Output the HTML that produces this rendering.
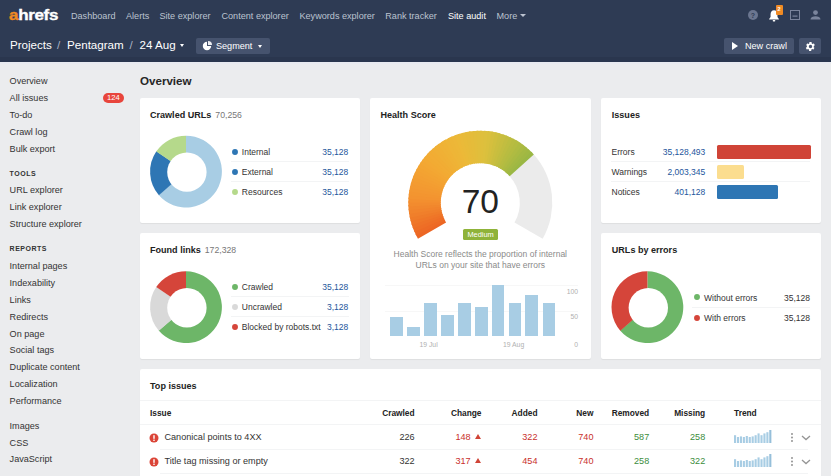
<!DOCTYPE html>
<html>
<head>
<meta charset="utf-8">
<title>Site audit</title>
<style>
*{box-sizing:border-box;margin:0;padding:0}
html,body{width:831px;height:476px;overflow:hidden}
body{font-family:"Liberation Sans",sans-serif;background:#ebecee;color:#333;position:relative;font-size:9.1px}
.abs{position:absolute;white-space:nowrap}
#hdr{position:absolute;left:0;top:0;width:831px;height:62px;background:#2e3b54;border-bottom:5px solid #2a364e;box-shadow:0 2px 0 #e8eaf0}
.nav{position:absolute;top:10.8px;font-size:9.1px;line-height:11px;color:#bcc3d0;white-space:nowrap}
.nav.on{color:#fff}
.crumb{position:absolute;top:38px;font-size:11.6px;line-height:14px;color:#fff;white-space:nowrap}
.crumb.sep{color:#aab2c2}
.btn{position:absolute;top:37.6px;height:16.8px;background:#46536e;border-radius:2px;color:#fff;font-size:9.1px;line-height:16.8px;white-space:nowrap}
.sb{position:absolute;left:9.6px;font-size:9.1px;line-height:12px;color:#333;white-space:nowrap}
.sbh{position:absolute;left:9.6px;font-size:7px;line-height:10px;font-weight:bold;letter-spacing:.5px;color:#333;white-space:nowrap}
.card{position:absolute;background:#fff;border-radius:2px;box-shadow:0 1px 1px rgba(0,0,0,.06)}
.ct{position:absolute;left:10px;top:11px;font-size:9.05px;line-height:12px;font-weight:bold;color:#222;white-space:nowrap}
.ct span{font-weight:normal;color:#777;margin-left:1.5px;font-size:8.7px}
.lg{position:absolute;font-size:8.5px;line-height:12px;color:#333;white-space:nowrap}
.lv{position:absolute;font-size:8.5px;line-height:12px;color:#24569c;white-space:nowrap;text-align:right}
.dot{position:absolute;width:6.2px;height:6.2px;border-radius:50%;margin:.15px 0 0 .3px}
.hr{position:absolute;height:1px;background:#f3f4f5}
.th{position:absolute;font-size:8.35px;line-height:12px;font-weight:bold;color:#222;white-space:nowrap}
.td{position:absolute;font-size:9.1px;line-height:12px;white-space:nowrap}
.r{text-align:right}
.ax{position:absolute;font-size:6.8px;line-height:8px;color:#b0b0b0;white-space:nowrap}
</style>
</head>
<body>
<div id="hdr">
  <div class="abs" id="logo" style="left:9px;top:6.25px;font-size:15px;line-height:18px;font-weight:bold;color:#fff;transform-origin:0 0;transform:scaleX(1.135);letter-spacing:-.3px;-webkit-text-stroke:.35px #fff"><span style="color:#f08a24;-webkit-text-stroke:.35px #f08a24">a</span>hrefs</div>
  <div class="nav" style="left:71px">Dashboard</div>
  <div class="nav" style="left:126px">Alerts</div>
  <div class="nav" style="left:159.5px">Site explorer</div>
  <div class="nav" style="left:221.5px">Content explorer</div>
  <div class="nav" style="left:299.5px">Keywords explorer</div>
  <div class="nav" style="left:385.3px">Rank tracker</div>
  <div class="nav on" style="left:448px">Site audit</div>
  <div class="nav" style="left:496.5px">More</div>
  <div class="abs" style="left:520.1px;top:14px;width:0;height:0;border-left:3px solid transparent;border-right:3px solid transparent;border-top:3.5px solid #bcc3d0"></div>

  <!-- header icons -->
  <svg class="abs" style="left:747px;top:9px" width="12" height="12" viewBox="0 0 12 12"><circle cx="6" cy="6" r="5" fill="#6b7690"/><text x="6" y="8.6" font-size="7" font-weight="bold" text-anchor="middle" fill="#2e3c56" font-family="Liberation Sans">?</text></svg>
  <svg class="abs" style="left:767.3px;top:8.8px" width="15.1" height="14" viewBox="0 0 14 13"><path d="M6.5 1.2C4.4 1.2 3.3 2.8 3.3 5v2.4L2 9.2v.6h9v-.6L9.700 7.400V5C9.700 2.800 8.600 1.200 6.500 1.200Z" fill="#fff"/><rect x="5.300" y="10.300" width="2.400" height="1.200" rx=".6" fill="#fff"/></svg>
  <div class="abs" style="left:775.5px;top:5px;width:7px;height:9.5px;background:#f08a24;border-radius:1px;color:#fff;font-size:5.5px;line-height:9.5px;text-align:center;font-weight:bold">2</div>
  <svg class="abs" style="left:789px;top:9px" width="12" height="12" viewBox="0 0 12 12"><rect x="1.500" y="1.500" width="9" height="9" fill="none" stroke="#7a849c" stroke-width="1"/><rect x="3.500" y="6.500" width="5" height="1.200" fill="#7a849c"/></svg>
  <svg class="abs" style="left:809px;top:9px" width="13" height="12" viewBox="0 0 13 12"><circle cx="6.500" cy="3.600" r="2.400" fill="#7a849c"/><path d="M1.500 10.500C1.500 8.500 4 7.300 6.500 7.300S11.500 8.500 11.500 10.500Z" fill="#7a849c"/></svg>

  <div class="crumb" style="left:10px">Projects</div>
  <div class="crumb sep" style="left:57px">/</div>
  <div class="crumb" style="left:67px">Pentagram</div>
  <div class="crumb sep" style="left:129.5px">/</div>
  <div class="crumb" style="left:139.5px">24 Aug</div>
  <div class="abs" style="left:180px;top:44px;width:0;height:0;border-left:2.5px solid transparent;border-right:2.5px solid transparent;border-top:3px solid #fff"></div>
  <div class="btn" style="left:196px;width:74px;padding-left:20px">Segment</div>
  <svg class="abs" style="left:202px;top:41px" width="10" height="10" viewBox="0 0 10 10"><path d="M5 .8A4.200 4.200 0 1 0 9.200 5H5Z" fill="#fff"/><path d="M6 0A4 4 0 0 1 10 4H6Z" fill="#fff" opacity=".9"/></svg>
  <div class="abs" style="left:257.5px;top:44.500px;width:0;height:0;border-left:2.5px solid transparent;border-right:2.5px solid transparent;border-top:3px solid #fff"></div>
  <div class="btn" style="left:724px;width:70px;padding-left:21px">New crawl</div>
  <div class="abs" style="left:732px;top:42px;width:0;height:0;border-top:4px solid transparent;border-bottom:4px solid transparent;border-left:6.5px solid #fff"></div>
  <div class="btn" style="left:799px;width:22px"></div>
  <svg class="abs" style="left:804.500px;top:40.500px" width="11" height="11" viewBox="0 0 24 24"><path fill="#fff" d="M19.140 12.940c.04-.3.060-.610.060-.940 0-.320-.020-.640-.070-.940l2.030-1.580a.490.490 0 0 0 .120-.610l-1.920-3.320a.488.488 0 0 0-.590-.220l-2.390.960c-.5-.380-1.030-.7-1.620-.940l-.360-2.540a.484.484 0 0 0-.480-.410h-3.840c-.240 0-.430.170-.470.410l-.360 2.540c-.590.240-1.130.570-1.620.940l-2.390-.960c-.220-.080-.470 0-.590.220L2.740 8.870c-.120.210-.080.470.120.610l2.030 1.580c-.5.300-.9.630-.9.940s.2.640.07.940l-2.030 1.580a.490.490 0 0 0-.120.610l1.920 3.320c.120.220.370.290.590.220l2.390-.960c.5.380 1.030.7 1.620.940l.360 2.540c.5.240.240.410.480.410h3.840c.240 0 .440-.170.470-.410l.360-2.540c.590-.240 1.130-.560 1.620-.940l2.390.960c.220.080.470 0 .590-.220l1.920-3.320c.120-.220.070-.470-.120-.610l-2.010-1.580zM12 15.600c-1.980 0-3.600-1.620-3.600-3.600s1.620-3.600 3.600-3.600 3.600 1.620 3.600 3.600-1.620 3.600-3.600 3.600z"/></svg>
</div>

<div class="sb" style="top:75px">Overview</div>
<div class="sb" style="top:92px">All issues</div>
<div class="abs" style="left:103px;top:92.5px;width:20.8px;height:10.4px;border-radius:6px;background:#e8453c;color:#fff;font-size:7.6px;line-height:10.4px;text-align:center">124</div>
<div class="sb" style="top:109px">To-do</div>
<div class="sb" style="top:126px">Crawl log</div>
<div class="sb" style="top:143px">Bulk export</div>
<div class="sbh" style="top:168.7px">TOOLS</div>
<div class="sb" style="top:184.3px">URL explorer</div>
<div class="sb" style="top:201.3px">Link explorer</div>
<div class="sb" style="top:218.3px">Structure explorer</div>
<div class="sbh" style="top:243.5px">REPORTS</div>
<div class="sb" style="top:260px">Internal pages</div>
<div class="sb" style="top:277px">Indexability</div>
<div class="sb" style="top:293.5px">Links</div>
<div class="sb" style="top:310.5px">Redirects</div>
<div class="sb" style="top:327.5px">On page</div>
<div class="sb" style="top:344px">Social tags</div>
<div class="sb" style="top:361px">Duplicate content</div>
<div class="sb" style="top:378px">Localization</div>
<div class="sb" style="top:395px">Performance</div>
<div class="sb" style="top:420px">Images</div>
<div class="sb" style="top:436.5px">CSS</div>
<div class="sb" style="top:453px">JavaScript</div>

<div class="abs" id="h1" style="left:140px;top:72.8px;font-size:11.6px;line-height:16px;font-weight:bold;color:#262626">Overview</div>

<div class="card" id="c1" style="left:140px;top:98px;width:220px;height:125px">
  <div class="ct">Crawled URLs <span>70,256</span></div>
  <svg class="abs" style="left:0;top:0" width="100" height="123" viewBox="0 0 100 123"><path d="M46 73.6L46.00 37.70A35.9 35.9 0 1 1 18.70 96.92Z" fill="#a8cde4"/><path d="M46 73.6L18.91 97.15A35.9 35.9 0 0 1 16.41 53.27Z" fill="#2e76b4"/><path d="M46 73.6L16.24 53.52A35.9 35.9 0 0 1 46.00 37.70Z" fill="#b5d98b"/><circle cx="46.90" cy="74.10" r="19.7" fill="#fff"/></svg>
  <svg class="abs" style="left:90.75px;top:49.9px" width="8" height="8" viewBox="0 0 8 8"><circle cx="4" cy="4" r="2.95" fill="#2e76b4"/></svg><div class="lg" style="left:101.8px;top:48px">Internal</div><div class="lv" style="right:11.8px;top:48px">35,128</div>
  <div class="hr" style="left:91px;top:62.8px;width:118px"></div>
  <svg class="abs" style="left:90.75px;top:69.9px" width="8" height="8" viewBox="0 0 8 8"><circle cx="4" cy="4" r="2.95" fill="#2e76b4"/></svg><div class="lg" style="left:101.8px;top:68px">External</div><div class="lv" style="right:11.8px;top:68px">35,128</div>
  <div class="hr" style="left:91px;top:82.8px;width:118px"></div>
  <svg class="abs" style="left:90.75px;top:90.2px" width="8" height="8" viewBox="0 0 8 8"><circle cx="4" cy="4" r="2.95" fill="#b5d98b"/></svg><div class="lg" style="left:101.8px;top:88px">Resources</div><div class="lv" style="right:11.8px;top:88px">35,128</div>
</div>

<div class="card" id="c2" style="left:370px;top:98px;width:221px;height:260.5px">
  <div class="ct" style="left:10.5px">Health Score</div>
  <svg class="abs" style="left:0;top:0" width="219" height="160" viewBox="0 0 219 160"><path d="M163.38 56.06A72 72 0 0 1 172.65 140.70L144.51 124.45A39.5 39.5 0 0 0 139.42 78.01Z" fill="#ebebeb"/><path d="M47.95 140.70A72 72 0 0 1 45.48 136.04L74.74 121.89A39.5 39.5 0 0 0 76.09 124.45Z" fill="#ec6624"/><path d="M46.15 137.39A72 72 0 0 1 43.93 132.60L73.89 120.01A39.5 39.5 0 0 0 75.11 122.63Z" fill="#ed6a25"/><path d="M44.52 133.99A72 72 0 0 1 42.56 129.09L73.14 118.08A39.5 39.5 0 0 0 74.21 120.77Z" fill="#ee6e26"/><path d="M43.08 130.50A72 72 0 0 1 41.37 125.51L72.49 116.12A39.5 39.5 0 0 0 73.42 118.86Z" fill="#ee7227"/><path d="M41.82 126.95A72 72 0 0 1 40.38 121.87L71.94 114.12A39.5 39.5 0 0 0 72.73 116.91Z" fill="#ef7628"/><path d="M40.75 123.33A72 72 0 0 1 39.58 118.19L71.50 112.10A39.5 39.5 0 0 0 72.15 114.92Z" fill="#ef7b29"/><path d="M39.87 119.67A72 72 0 0 1 38.97 114.47L71.17 110.06A39.5 39.5 0 0 0 71.66 112.91Z" fill="#f07f2b"/><path d="M39.19 115.96A72 72 0 0 1 38.55 110.72L70.94 108.01A39.5 39.5 0 0 0 71.29 110.88Z" fill="#f1832c"/><path d="M38.69 112.23A72 72 0 0 1 38.34 106.96L70.82 105.94A39.5 39.5 0 0 0 71.02 108.83Z" fill="#f1872d"/><path d="M38.40 108.47A72 72 0 0 1 38.32 103.19L70.81 103.87A39.5 39.5 0 0 0 70.85 106.77Z" fill="#f28b2e"/><path d="M38.30 104.70A72 72 0 0 1 38.49 99.43L70.91 101.81A39.5 39.5 0 0 0 70.80 104.70Z" fill="#f38f2f"/><path d="M38.40 100.93A72 72 0 0 1 38.87 95.68L71.11 99.75A39.5 39.5 0 0 0 70.85 102.63Z" fill="#f39330"/><path d="M38.69 97.17A72 72 0 0 1 39.44 91.95L71.42 97.71A39.5 39.5 0 0 0 71.02 100.57Z" fill="#f39530"/><path d="M39.19 93.44A72 72 0 0 1 40.20 88.26L71.84 95.68A39.5 39.5 0 0 0 71.29 98.52Z" fill="#f39731"/><path d="M39.87 89.73A72 72 0 0 1 41.16 84.61L72.37 93.68A39.5 39.5 0 0 0 71.66 96.49Z" fill="#f39931"/><path d="M40.75 86.07A72 72 0 0 1 42.30 81.02L73.00 91.71A39.5 39.5 0 0 0 72.15 94.48Z" fill="#f39b31"/><path d="M41.82 82.45A72 72 0 0 1 43.64 77.50L73.73 89.78A39.5 39.5 0 0 0 72.73 92.49Z" fill="#f39d31"/><path d="M43.08 78.90A72 72 0 0 1 45.15 74.04L74.56 87.88A39.5 39.5 0 0 0 73.42 90.54Z" fill="#f39f32"/><path d="M44.52 75.41A72 72 0 0 1 46.85 70.68L75.49 86.03A39.5 39.5 0 0 0 74.21 88.63Z" fill="#f3a132"/><path d="M46.15 72.01A72 72 0 0 1 48.71 67.40L76.51 84.24A39.5 39.5 0 0 0 75.11 86.77Z" fill="#f3a332"/><path d="M47.95 68.70A72 72 0 0 1 50.75 64.23L77.63 82.50A39.5 39.5 0 0 0 76.09 84.95Z" fill="#f3a532"/><path d="M49.92 65.49A72 72 0 0 1 52.95 61.17L78.84 80.82A39.5 39.5 0 0 0 77.17 83.19Z" fill="#f3a733"/><path d="M52.05 62.38A72 72 0 0 1 55.31 58.23L80.13 79.20A39.5 39.5 0 0 0 78.34 81.48Z" fill="#f3a933"/><path d="M54.35 59.39A72 72 0 0 1 57.81 55.41L81.51 77.66A39.5 39.5 0 0 0 79.60 79.84Z" fill="#f2ab33"/><path d="M56.79 56.52A72 72 0 0 1 60.47 52.73L82.96 76.19A39.5 39.5 0 0 0 80.95 78.27Z" fill="#f2ac34"/><path d="M59.39 53.79A72 72 0 0 1 63.25 50.20L84.49 74.80A39.5 39.5 0 0 0 82.37 76.77Z" fill="#f1ad34"/><path d="M62.12 51.19A72 72 0 0 1 66.17 47.81L86.09 73.49A39.5 39.5 0 0 0 83.87 75.35Z" fill="#f0af35"/><path d="M64.99 48.75A72 72 0 0 1 69.21 45.58L87.76 72.26A39.5 39.5 0 0 0 85.44 74.00Z" fill="#f0b035"/><path d="M67.98 46.45A72 72 0 0 1 72.36 43.51L89.49 71.13A39.5 39.5 0 0 0 87.08 72.74Z" fill="#efb236"/><path d="M71.09 44.32A72 72 0 0 1 75.61 41.61L91.27 70.09A39.5 39.5 0 0 0 88.79 71.57Z" fill="#efb336"/><path d="M74.30 42.35A72 72 0 0 1 78.96 39.88L93.11 69.14A39.5 39.5 0 0 0 90.55 70.49Z" fill="#eeb537"/><path d="M77.61 40.55A72 72 0 0 1 82.40 38.33L94.99 68.29A39.5 39.5 0 0 0 92.37 69.51Z" fill="#edb637"/><path d="M81.01 38.92A72 72 0 0 1 85.91 36.96L96.92 67.54A39.5 39.5 0 0 0 94.23 68.61Z" fill="#edb738"/><path d="M84.50 37.48A72 72 0 0 1 89.49 35.77L98.88 66.89A39.5 39.5 0 0 0 96.14 67.82Z" fill="#ecb938"/><path d="M88.05 36.22A72 72 0 0 1 93.13 34.78L100.88 66.34A39.5 39.5 0 0 0 98.09 67.13Z" fill="#eaba39"/><path d="M91.67 35.15A72 72 0 0 1 96.81 33.98L102.90 65.90A39.5 39.5 0 0 0 100.08 66.55Z" fill="#e8bb39"/><path d="M95.33 34.27A72 72 0 0 1 100.53 33.37L104.94 65.57A39.5 39.5 0 0 0 102.09 66.06Z" fill="#e6bb3a"/><path d="M99.04 33.59A72 72 0 0 1 104.28 32.95L106.99 65.34A39.5 39.5 0 0 0 104.12 65.69Z" fill="#e5bc3a"/><path d="M102.77 33.09A72 72 0 0 1 108.04 32.74L109.06 65.22A39.5 39.5 0 0 0 106.17 65.42Z" fill="#e3bd3b"/><path d="M106.53 32.80A72 72 0 0 1 111.81 32.72L111.13 65.21A39.5 39.5 0 0 0 108.23 65.25Z" fill="#e1be3c"/><path d="M110.30 32.70A72 72 0 0 1 115.57 32.89L113.19 65.31A39.5 39.5 0 0 0 110.30 65.20Z" fill="#dfbf3c"/><path d="M114.07 32.80A72 72 0 0 1 119.32 33.27L115.25 65.51A39.5 39.5 0 0 0 112.37 65.25Z" fill="#ddc03d"/><path d="M117.83 33.09A72 72 0 0 1 123.05 33.84L117.29 65.82A39.5 39.5 0 0 0 114.43 65.42Z" fill="#dac03d"/><path d="M121.56 33.59A72 72 0 0 1 126.74 34.60L119.32 66.24A39.5 39.5 0 0 0 116.48 65.69Z" fill="#d5bf3e"/><path d="M125.27 34.27A72 72 0 0 1 130.39 35.56L121.32 66.77A39.5 39.5 0 0 0 118.51 66.06Z" fill="#d0bf3e"/><path d="M128.93 35.15A72 72 0 0 1 133.98 36.70L123.29 67.40A39.5 39.5 0 0 0 120.52 66.55Z" fill="#cbbe3f"/><path d="M132.55 36.22A72 72 0 0 1 137.50 38.04L125.22 68.13A39.5 39.5 0 0 0 122.51 67.13Z" fill="#c7be3f"/><path d="M136.10 37.48A72 72 0 0 1 140.96 39.55L127.12 68.96A39.5 39.5 0 0 0 124.46 67.82Z" fill="#c2bd40"/><path d="M139.59 38.92A72 72 0 0 1 144.32 41.25L128.97 69.89A39.5 39.5 0 0 0 126.37 68.61Z" fill="#bdbd40"/><path d="M142.99 40.55A72 72 0 0 1 147.60 43.11L130.76 70.91A39.5 39.5 0 0 0 128.23 69.51Z" fill="#b8bc41"/><path d="M146.30 42.35A72 72 0 0 1 150.77 45.15L132.50 72.03A39.5 39.5 0 0 0 130.05 70.49Z" fill="#b4bc41"/><path d="M149.51 44.32A72 72 0 0 1 153.83 47.35L134.18 73.24A39.5 39.5 0 0 0 131.81 71.57Z" fill="#afbb42"/><path d="M152.62 46.45A72 72 0 0 1 156.77 49.71L135.80 74.53A39.5 39.5 0 0 0 133.52 72.74Z" fill="#aaba42"/><path d="M155.61 48.75A72 72 0 0 1 159.59 52.21L137.34 75.91A39.5 39.5 0 0 0 135.16 74.00Z" fill="#a4b943"/><path d="M158.48 51.19A72 72 0 0 1 162.27 54.87L138.81 77.36A39.5 39.5 0 0 0 136.73 75.35Z" fill="#a0b843"/><path d="M161.21 53.79A72 72 0 0 1 163.81 56.52L139.65 78.27A39.5 39.5 0 0 0 138.23 76.77Z" fill="#9ab744"/></svg>
  <div class="abs" id="big" style="left:0;width:220.6px;top:83.8px;text-align:center;font-size:33.5px;line-height:40px;color:#222">70</div>
  <div class="abs" style="left:92.9px;top:131.3px;width:35.4px;height:11px;background:#8fb339;border-radius:1.500px;color:#fff;font-size:7.4px;line-height:11px;text-align:center">Medium</div>
  <div class="abs" id="desc" style="left:0;width:220.6px;top:151px;text-align:center;font-size:8.5px;line-height:10.7px;color:#8a8a8a">Health Score reflects the proportion of internal<br>URLs on your site that have errors</div>
  <div class="abs" style="left:15px;top:187px;width:193px;height:1px;background:#f7f7f7"></div>
  <div class="abs" style="left:15px;top:212.5px;width:193px;height:1px;background:#f7f7f7"></div>
  <div class="abs" style="left:20.4px;top:219.1px;width:12.5px;height:18.6px;background:#a8cde4"></div><div class="abs" style="left:37.1px;top:228.8px;width:12.5px;height:8.9px;background:#a8cde4"></div><div class="abs" style="left:54.3px;top:204.9px;width:12.5px;height:32.8px;background:#a8cde4"></div><div class="abs" style="left:71.4px;top:217.0px;width:12.5px;height:20.7px;background:#a8cde4"></div><div class="abs" style="left:88.2px;top:204.5px;width:12.5px;height:33.2px;background:#a8cde4"></div><div class="abs" style="left:105.0px;top:209.1px;width:12.5px;height:28.6px;background:#a8cde4"></div><div class="abs" style="left:121.8px;top:187.0px;width:12.5px;height:50.7px;background:#a8cde4"></div><div class="abs" style="left:138.6px;top:204.9px;width:12.5px;height:32.8px;background:#a8cde4"></div><div class="abs" style="left:155.4px;top:197.0px;width:12.5px;height:40.7px;background:#a8cde4"></div><div class="abs" style="left:172.5px;top:204.5px;width:12.5px;height:33.2px;background:#a8cde4"></div>
  <div class="ax" style="right:13px;top:190px">100</div>
  <div class="ax" style="right:13px;top:215px">50</div>
  <div class="ax" style="right:13px;top:242.5px">0</div>
  <div class="ax" style="left:49.5px;top:242.5px">19 Jul</div>
  <div class="ax" style="left:133px;top:242.5px">19 Aug</div>
</div>

<div class="card" id="c3" style="left:601px;top:98px;width:220px;height:125px">
  <div class="ct" style="left:10.8px">Issues</div>
  <div class="lg" style="left:10.5px;top:48px">Errors</div><div class="lv" style="right:115.7px;top:48px">35,128,493</div>
  <div class="abs" style="left:115.5px;top:46.700px;width:94.2px;height:14px;background:#d04437;border-radius:1.500px"></div>
  <div class="hr" style="left:10px;top:62.8px;width:199px"></div>
  <div class="lg" style="left:10.5px;top:68px">Warnings</div><div class="lv" style="right:115.7px;top:68px">2,003,345</div>
  <div class="abs" style="left:115.5px;top:67px;width:27.2px;height:13.500px;background:#fbdd8f;border-radius:1.500px"></div>
  <div class="hr" style="left:10px;top:82.8px;width:199px"></div>
  <div class="lg" style="left:10.5px;top:88px">Notices</div><div class="lv" style="right:115.7px;top:88px">401,128</div>
  <div class="abs" style="left:115.5px;top:87px;width:61.2px;height:14px;background:#2e76b4;border-radius:1.500px"></div>
</div>

<div class="card" id="c4" style="left:140px;top:233px;width:220px;height:125.5px">
  <div class="ct">Found links <span>172,328</span></div>
  <svg class="abs" style="left:0;top:0" width="100" height="124" viewBox="0 0 100 124"><path d="M46 74.2L46.00 38.30A35.9 35.9 0 1 1 18.70 97.52Z" fill="#6db668"/><path d="M46 74.2L18.91 97.75A35.9 35.9 0 0 1 16.41 53.87Z" fill="#d9d9d9"/><path d="M46 74.2L16.24 54.12A35.9 35.9 0 0 1 46.00 38.30Z" fill="#d5453a"/><circle cx="46.90" cy="74.70" r="19.7" fill="#fff"/></svg>
  <svg class="abs" style="left:90.75px;top:49.9px" width="8" height="8" viewBox="0 0 8 8"><circle cx="4" cy="4" r="2.95" fill="#6db668"/></svg><div class="lg" style="left:101.8px;top:48px">Crawled</div><div class="lv" style="right:11.8px;top:48px">35,128</div>
  <div class="hr" style="left:91px;top:62.8px;width:118px"></div>
  <svg class="abs" style="left:90.75px;top:69.9px" width="8" height="8" viewBox="0 0 8 8"><circle cx="4" cy="4" r="2.95" fill="#d9d9d9"/></svg><div class="lg" style="left:101.8px;top:68px">Uncrawled</div><div class="lv" style="right:11.8px;top:68px">3,128</div>
  <div class="hr" style="left:91px;top:82.8px;width:118px"></div>
  <svg class="abs" style="left:90.75px;top:90.2px" width="8" height="8" viewBox="0 0 8 8"><circle cx="4" cy="4" r="2.95" fill="#d5453a"/></svg><div class="lg" style="left:101.8px;top:88px">Blocked by robots.txt</div><div class="lv" style="right:11.8px;top:88px">3,128</div>
</div>

<div class="card" id="c5" style="left:601px;top:233px;width:220px;height:125.5px">
  <div class="ct" style="left:10.8px">URLs by errors</div>
  <svg class="abs" style="left:0;top:0" width="100" height="124" viewBox="0 0 100 124"><path d="M46.4 74.2L46.40 38.30A35.9 35.9 0 1 1 19.10 97.52Z" fill="#6db668"/><path d="M46.4 74.2L19.31 97.75A35.9 35.9 0 0 1 46.40 38.30Z" fill="#d5453a"/><circle cx="47.30" cy="74.70" r="19.7" fill="#fff"/></svg>
  <svg class="abs" style="left:91.8px;top:60.4px" width="8" height="8" viewBox="0 0 8 8"><circle cx="4" cy="4" r="2.95" fill="#6db668"/></svg><div class="lg" style="left:103px;top:58.500px">Without errors</div><div class="lv" style="right:11px;top:58.500px;color:#333">35,128</div>
  <div class="hr" style="left:91px;top:73.7px;width:118px"></div>
  <svg class="abs" style="left:91.8px;top:80.9px" width="8" height="8" viewBox="0 0 8 8"><circle cx="4" cy="4" r="2.95" fill="#d5453a"/></svg><div class="lg" style="left:103px;top:79px">With errors</div><div class="lv" style="right:11px;top:79px;color:#333">35,128</div>
</div>

<div class="card" id="c6" style="left:140px;top:368.7px;width:681px;height:120px">
  <div class="ct" style="top:11.3px">Top issues</div>
  <div class="hr" style="left:0;top:31.3px;width:681px"></div>
  <div class="th" style="left:10px;top:38.7px">Issue</div>
  <div class="th r" style="right:406.4px;top:38.7px">Crawled</div>
  <div class="th r" style="right:339.5px;top:38.7px">Change</div>
  <div class="th r" style="right:283.5px;top:38.7px">Added</div>
  <div class="th r" style="right:227.5px;top:38.7px">New</div>
  <div class="th r" style="right:171.8px;top:38.7px">Removed</div>
  <div class="th r" style="right:115.79999999999995px;top:38.7px">Missing</div>
  <div class="th" style="left:594px;top:38.7px">Trend</div>
  <div class="hr" style="left:0;top:55.5px;width:681px"></div>
  
  <svg class="abs" style="left:9.4px;top:63.90px" width="10" height="10" viewBox="0 0 10 10"><circle cx="5" cy="5" r="4.5" fill="#db4437"/><rect x="4.3" y="2.2" width="1.4" height="3.6" fill="#fff"/><rect x="4.3" y="6.6" width="1.4" height="1.4" fill="#fff"/></svg>
  <div class="td" style="left:24.5px;top:62.400000000000006px;color:#333">Canonical points to 4XX</div>
  <div class="td r" style="right:406.4px;top:62.400000000000006px;color:#333">226</div>
  <div class="td r" style="right:350.4px;top:62.400000000000006px;color:#c9302c">148</div>
  <div class="abs" style="left:335.1px;top:65.2px;width:0;height:0;border-left:3.3px solid transparent;border-right:3.3px solid transparent;border-bottom:5.5px solid #d04437"></div>
  <div class="td r" style="right:283.5px;top:62.400000000000006px;color:#c9302c">322</div>
  <div class="td r" style="right:227.5px;top:62.400000000000006px;color:#c9302c">740</div>
  <div class="td r" style="right:171.8px;top:62.400000000000006px;color:#3c8d3c">587</div>
  <div class="td r" style="right:115.79999999999995px;top:62.400000000000006px;color:#3c8d3c">258</div>
  <svg class="abs" style="left:593.7px;top:60.40px" width="40" height="14" viewBox="0 0 40 14"><rect x="0.00" y="6.20" width="2.1" height="7.80" fill="#a8cde4"/><rect x="2.94" y="8.00" width="2.1" height="6.00" fill="#a8cde4"/><rect x="5.88" y="7.40" width="2.1" height="6.60" fill="#a8cde4"/><rect x="8.82" y="8.00" width="2.1" height="6.00" fill="#a8cde4"/><rect x="11.76" y="7.00" width="2.1" height="7.00" fill="#a8cde4"/><rect x="14.70" y="8.00" width="2.1" height="6.00" fill="#a8cde4"/><rect x="17.64" y="7.40" width="2.1" height="6.60" fill="#a8cde4"/><rect x="20.58" y="6.20" width="2.1" height="7.80" fill="#a8cde4"/><rect x="23.52" y="4.40" width="2.1" height="9.60" fill="#a8cde4"/><rect x="26.46" y="6.20" width="2.1" height="7.80" fill="#a8cde4"/><rect x="29.40" y="4.40" width="2.1" height="9.60" fill="#a8cde4"/><rect x="32.34" y="3.20" width="2.1" height="10.80" fill="#a8cde4"/><rect x="35.28" y="1.00" width="2.1" height="13.00" fill="#96bfda"/></svg>
  <svg class="abs" style="left:649.5px;top:63.00px" width="4" height="11" viewBox="0 0 4 11"><circle cx="2" cy="2" r="1.05" fill="#9a9a9a"/><circle cx="2" cy="5.5" r="1.05" fill="#9a9a9a"/><circle cx="2" cy="9" r="1.05" fill="#9a9a9a"/></svg>
  <svg class="abs" style="left:661px;top:66.20px" width="10" height="6" viewBox="0 0 10 6"><path d="M1 1L5 4.6L9 1" fill="none" stroke="#959595" stroke-width="1.3"/></svg>
  <div class="hr" style="left:20px;top:80.10px;width:648px"></div>
  
  <svg class="abs" style="left:9.4px;top:88.10px" width="10" height="10" viewBox="0 0 10 10"><circle cx="5" cy="5" r="4.5" fill="#db4437"/><rect x="4.3" y="2.2" width="1.4" height="3.6" fill="#fff"/><rect x="4.3" y="6.6" width="1.4" height="1.4" fill="#fff"/></svg>
  <div class="td" style="left:24.5px;top:86.6px;color:#333">Title tag missing or empty</div>
  <div class="td r" style="right:406.4px;top:86.6px;color:#333">322</div>
  <div class="td r" style="right:350.4px;top:86.6px;color:#c9302c">317</div>
  <div class="abs" style="left:335.1px;top:89.39999999999999px;width:0;height:0;border-left:3.3px solid transparent;border-right:3.3px solid transparent;border-bottom:5.5px solid #d04437"></div>
  <div class="td r" style="right:283.5px;top:86.6px;color:#c9302c">454</div>
  <div class="td r" style="right:227.5px;top:86.6px;color:#c9302c">740</div>
  <div class="td r" style="right:171.8px;top:86.6px;color:#3c8d3c">258</div>
  <div class="td r" style="right:115.79999999999995px;top:86.6px;color:#3c8d3c">322</div>
  <svg class="abs" style="left:593.7px;top:84.60px" width="40" height="14" viewBox="0 0 40 14"><rect x="0.00" y="6.20" width="2.1" height="7.80" fill="#a8cde4"/><rect x="2.94" y="8.00" width="2.1" height="6.00" fill="#a8cde4"/><rect x="5.88" y="7.40" width="2.1" height="6.60" fill="#a8cde4"/><rect x="8.82" y="8.00" width="2.1" height="6.00" fill="#a8cde4"/><rect x="11.76" y="7.00" width="2.1" height="7.00" fill="#a8cde4"/><rect x="14.70" y="8.00" width="2.1" height="6.00" fill="#a8cde4"/><rect x="17.64" y="7.40" width="2.1" height="6.60" fill="#a8cde4"/><rect x="20.58" y="6.20" width="2.1" height="7.80" fill="#a8cde4"/><rect x="23.52" y="4.40" width="2.1" height="9.60" fill="#a8cde4"/><rect x="26.46" y="6.20" width="2.1" height="7.80" fill="#a8cde4"/><rect x="29.40" y="4.40" width="2.1" height="9.60" fill="#a8cde4"/><rect x="32.34" y="3.20" width="2.1" height="10.80" fill="#a8cde4"/><rect x="35.28" y="1.00" width="2.1" height="13.00" fill="#96bfda"/></svg>
  <svg class="abs" style="left:649.5px;top:87.20px" width="4" height="11" viewBox="0 0 4 11"><circle cx="2" cy="2" r="1.05" fill="#9a9a9a"/><circle cx="2" cy="5.5" r="1.05" fill="#9a9a9a"/><circle cx="2" cy="9" r="1.05" fill="#9a9a9a"/></svg>
  <svg class="abs" style="left:661px;top:90.40px" width="10" height="6" viewBox="0 0 10 6"><path d="M1 1L5 4.6L9 1" fill="none" stroke="#959595" stroke-width="1.3"/></svg>
  <div class="hr" style="left:20px;top:104.30px;width:648px"></div>
</div>
</body>
</html>
